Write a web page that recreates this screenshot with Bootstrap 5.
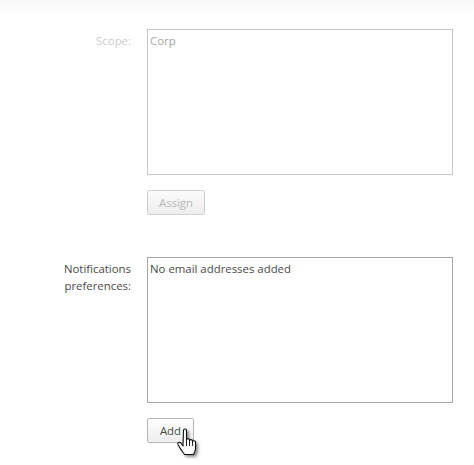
<!DOCTYPE html>
<html lang="en">
<head>
  <meta charset="UTF-8">
  <meta name="viewport" content="width=device-width, initial-scale=1.0">
  <title>Scope and notifications</title>
  <link rel="stylesheet" href="https://cdn.jsdelivr.net/npm/bootstrap@5.3.0/dist/css/bootstrap.min.css">
  <style>
    body {
      background-color: #fff;
      font-family: "Open Sans", "Noto Sans", sans-serif;
      font-size: 11.4px;
      line-height: 17px;
      color: #4a4a4a;
      overflow: hidden;
    }
    .top-strip {
      height: 10px;
      background: linear-gradient(#f7f7f7, #fdfdfd);
    }
    .form-area {
      padding: 19px 20px 0 0;
      width: 474px;
    }
    .field-row {
      display: flex;
      gap: 16px;
    }
    .field-label {
      width: 131px;
      flex: none;
      text-align: right;
      padding-top: 3px;
    }
    .field-body {
      flex: 1;
    }
    .value-box {
      height: 146px;
      width: 306px;
      border: 1px solid #a9a9a9;
      padding: 2px 2px;
      margin-bottom: 15px;
    }
    .act-btn {
      display: block;
      width: 47px;
      height: 25px;
      padding: 0;
      font-size: 11.4px;
      line-height: 22px;
      color: #4a4a4a;
      border: 1px solid #b5b5b5;
      border-radius: 2px;
      background: linear-gradient(#fff, #ededed);
    }
    .act-btn:disabled {
      width: 58px;
      color: #b8b8b8;
      border-color: #d0d0d0;
      background: linear-gradient(#fafafa, #eee);
      opacity: 1;
    }
    .is-off .field-label { color: #cbcbcb; }
    .is-off .value-box { color: #a6a6a6; border-color: #c8c8c8; }
    .second-row { margin-top: 42px; }
    .hand-cursor {
      position: absolute;
      left: 176px;
      top: 428px;
      width: 30px;
      height: 33px;
    }
  </style>
</head>
<body>
  <div class="top-strip"></div>
  <div class="form-area">
    <div class="field-row is-off">
      <div class="field-label">Scope:</div>
      <div class="field-body">
        <div class="value-box">Corp</div>
        <button type="button" class="act-btn" disabled>Assign</button>
      </div>
    </div>
    <div class="field-row second-row">
      <div class="field-label">Notifications<br>preferences:</div>
      <div class="field-body">
        <div class="value-box">No email addresses added</div>
        <button type="button" class="act-btn">Add</button>
      </div>
    </div>
  </div>
  <svg class="hand-cursor" viewBox="0 0 30 33" aria-hidden="true">
    <defs>
      <filter id="cursor-shadow" x="-30%" y="-30%" width="170%" height="170%">
        <feDropShadow dx="2" dy="2" stdDeviation="1.4" flood-color="#000" flood-opacity="0.45"/>
      </filter>
    </defs>
    <path filter="url(#cursor-shadow)" fill="#fff" stroke="#111" stroke-width="1.1" stroke-linejoin="round"
      d="M7.5 2.5c0-2 3-2 3 0v9.500c0-1.800 3-1.800 3 0v1c0-1.800 3-1.800 3 0v1c0-1.600 3-1.600 3 0v6.500c0 2.500-1 4-2 6H8.500c-1-2-3-4-4.500-6.500l-2-3.500c-1-2 1.500-3 2.700-1.500l2.300 3z"/>
    <path fill="none" stroke="#111" stroke-width="0.9" d="M10.500 12v6M13.500 13v5M16.500 14v4"/>
  </svg>
</body>
</html>
